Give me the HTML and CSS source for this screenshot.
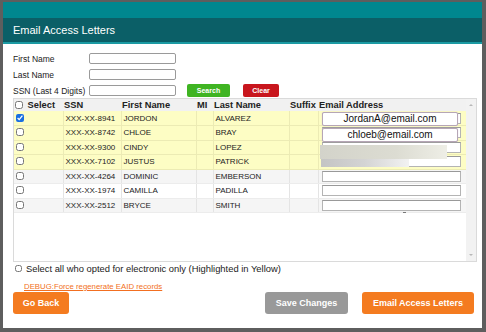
FILE: index.html
```html
<!DOCTYPE html>
<html lang="en">
<head>
    <meta charset="UTF-8">
    <meta name="viewport" content="width=device-width, initial-scale=1.0">
    <title>Email Access Letters</title>
    <link rel="stylesheet" href="styles.css">
</head>
<body>
    <div class="frame">
        <div class="topbar"></div>
        <div class="titlebar">Email Access Letters</div>

        <div class="content">
            <div class="search-form">
                <label>First Name</label>
                <input type="text" class="field">
                <label>Last Name</label>
                <input type="text" class="field">
                <label>SSN (Last 4 Digits)</label>
                <div class="field-row">
                    <input type="text" class="field">
                    <button class="btn-search">Search</button>
                    <button class="btn-clear">Clear</button>
                </div>
            </div>

            <div class="grid-box">
                <div class="grid-scroll">
                    <table class="grid">
                        <colgroup>
                            <col style="width:49px">
                            <col style="width:58px">
                            <col style="width:75px">
                            <col style="width:17px">
                            <col style="width:76px">
                            <col style="width:29px">
                            <col style="width:148px">
                        </colgroup>
                        <thead>
                            <tr>
                                <th><input type="checkbox" class="check"> Select</th>
                                <th>SSN</th>
                                <th>First Name</th>
                                <th>MI</th>
                                <th>Last Name</th>
                                <th>Suffix</th>
                                <th>Email Address</th>
                            </tr>
                        </thead>
                        <tbody>
                            <tr class="electronic">
                                <td><input type="checkbox" class="check" checked></td>
                                <td>XXX-XX-8941</td><td>JORDON</td><td></td><td>ALVAREZ</td><td></td>
                                <td><input type="text" class="email"></td>
                            </tr>
                            <tr class="electronic">
                                <td><input type="checkbox" class="check"></td>
                                <td>XXX-XX-8742</td><td>CHLOE</td><td></td><td>BRAY</td><td></td>
                                <td><input type="text" class="email"></td>
                            </tr>
                            <tr class="electronic">
                                <td><input type="checkbox" class="check"></td>
                                <td>XXX-XX-9300</td><td>CINDY</td><td></td><td>LOPEZ</td><td></td>
                                <td><input type="text" class="email"></td>
                            </tr>
                            <tr class="electronic">
                                <td><input type="checkbox" class="check"></td>
                                <td>XXX-XX-7102</td><td>JUSTUS</td><td></td><td>PATRICK</td><td></td>
                                <td><input type="text" class="email"></td>
                            </tr>
                            <tr class="alt">
                                <td><input type="checkbox" class="check"></td>
                                <td>XXX-XX-4264</td><td>DOMINIC</td><td></td><td>EMBERSON</td><td></td>
                                <td><input type="text" class="email"></td>
                            </tr>
                            <tr>
                                <td><input type="checkbox" class="check"></td>
                                <td>XXX-XX-1974</td><td>CAMILLA</td><td></td><td>PADILLA</td><td></td>
                                <td><input type="text" class="email"></td>
                            </tr>
                            <tr class="alt">
                                <td><input type="checkbox" class="check"></td>
                                <td>XXX-XX-2512</td><td>BRYCE</td><td></td><td>SMITH</td><td></td>
                                <td><input type="text" class="email"></td>
                            </tr>
                        </tbody>
                    </table>
                </div>
                <div class="vscroll">
                    <span class="arrow-up"></span>
                    <span class="arrow-down"></span>
                </div>

                <!-- annotations pasted over the grid -->
                <div class="callout callout-1">JordanA@email.com</div>
                <div class="callout callout-2">chloeb@email.com</div>
                <div class="smudge smudge-1"></div>
                <div class="smudge smudge-2"></div>
                <span class="caret-mark"></span>
            </div>

            <label class="select-all"><input type="checkbox" class="check"> Select all who opted for electronic only (Highlighted in Yellow)</label>

            <a href="#" class="debug-link">DEBUG:Force regenerate EAID records</a>

            <div class="actions">
                <button class="btn btn-orange btn-back">Go Back</button>
                <div class="actions-right">
                    <button class="btn btn-gray">Save Changes</button>
                    <button class="btn btn-orange">Email Access Letters</button>
                </div>
            </div>
        </div>
    </div>
</body>
</html>
```

FILE: styles.css
```css
html, body {
    margin: 0;
    padding: 0;
    height: 100%;
}
body {
    font-family: 'Liberation Sans', Arial, sans-serif;
    background-color: #5e5e5e;
    color: #222;
    padding: 2px 4px 4px 3px;
    box-sizing: border-box;
}
.frame {
    background-color: #fff;
    height: 326px;
    display: flex;
    flex-direction: column;
}
.topbar {
    height: 16px;
    background-color: #00878f;
}
.titlebar {
    height: 24px;
    line-height: 24px;
    background-color: #0b5f67;
    border-bottom: 2px solid #1b9aa3;
    color: #fff;
    font-size: 11px;
    padding-left: 10px;
}
.content {
    padding: 9px 8px 0 10px;
    flex: 1;
    display: flex;
    flex-direction: column;
}
.search-form {
    display: grid;
    grid-template-columns: 76px auto;
    row-gap: 5px;
    align-items: center;
    font-size: 8.5px;
}
.field {
    width: 87px;
    height: 11px;
    box-sizing: border-box;
    border: 1px solid #9a9a9a;
    border-radius: 2px;
    padding: 0;
    margin: 0;
}
.field-row {
    display: flex;
    align-items: center;
    height: 11px;
}
.btn-search, .btn-clear {
    height: 13px;
    border: none;
    border-radius: 2px;
    color: #fff;
    font-family: 'Liberation Sans', Arial, sans-serif;
    font-weight: bold;
    font-size: 7px;
    padding: 0;
}
.btn-search {
    width: 43px;
    margin-left: 11px;
    background-color: #3fb422;
}
.btn-clear {
    width: 36px;
    margin-left: 13px;
    background-color: #c8161d;
}
.grid-box {
    position: relative;
    margin-top: 2px;
    width: 464px;
    height: 164px;
    box-sizing: border-box;
    border: 1px solid #dadada;
    display: flex;
}
.grid-scroll {
    width: 452px;
}
.grid {
    border-collapse: collapse;
    table-layout: fixed;
    width: 452px;
    font-size: 8px;
}
.grid th {
    background-color: #f1f1f1;
    height: 12px;
    font-size: 9.3px;
    text-align: left;
    padding: 0 0 0 1px;
    white-space: nowrap;
}
.grid td {
    height: 14.5px;
    padding: 0 0 0 2px;
    border-left: 1px solid #e4e4e4;
    border-bottom: 1px solid #ececec;
    white-space: nowrap;
    box-sizing: border-box;
}
.grid td:first-child {
    border-left: none;
    padding-left: 2px;
}
.grid tr.electronic td {
    background-color: #fdfdc4;
    border-color: #ecebb4;
}
.grid tr.alt td {
    background-color: #f5f5f5;
}
.check {
    width: 8px;
    height: 8px;
    margin: 0;
    vertical-align: -1px;
    accent-color: #1a6fe0;
}
.grid th .check {
    margin-right: 2px;
}
.email {
    display: block;
    width: 139px;
    height: 11px;
    margin-left: 1px;
    box-sizing: border-box;
    border: 1px solid #b4b4b4;
    border-top-color: #999;
    padding: 0;
    background-color: #fff;
}
.vscroll {
    width: 10px;
    background-color: #f2f2f2;
    display: flex;
    flex-direction: column;
    justify-content: space-between;
    align-items: center;
    padding: 5px 0;
    box-sizing: border-box;
}
.arrow-up, .arrow-down {
    width: 0;
    height: 0;
    border-left: 2px solid transparent;
    border-right: 2px solid transparent;
}
.arrow-up {
    border-bottom: 2px solid #b8b8b8;
}
.arrow-down {
    border-top: 2px solid #b8b8b8;
}
.callout {
    position: absolute;
    left: 308px;
    width: 136px;
    height: 14px;
    box-sizing: border-box;
    border: 1px solid #b6a6b6;
    border-radius: 2px;
    background-color: #fff;
    font-size: 10px;
    line-height: 12px;
    text-align: center;
    color: #111;
    box-shadow: 0 0 1px #c8b8c8;
}
.callout-1 {
    top: 13px;
}
.callout-2 {
    top: 29px;
}
.smudge {
    position: absolute;
}
.smudge-1 {
    left: 306px;
    top: 46px;
    width: 127px;
    height: 14px;
    background: linear-gradient(to right, #d3d3ca, #dcdcd2 60%, #eeeee6);
}
.smudge-2 {
    left: 307px;
    top: 60px;
    width: 88px;
    height: 8px;
    background: linear-gradient(to right, #c4c4c4, #d4d4d4 50%, #f2f2f2);
}
.caret-mark {
    position: absolute;
    left: 389px;
    top: 111px;
    width: 3px;
    height: 2px;
    border-bottom: 1px solid #777;
}
.select-all {
    display: flex;
    align-items: center;
    gap: 4px;
    margin-top: 2px;
    margin-left: 2px;
    font-size: 9.4px;
    height: 9px;
}
.select-all .check {
    width: 7px;
    height: 7px;
}
.debug-link {
    margin-top: 9px;
    margin-left: 11px;
    font-size: 7.8px;
    color: #f26f21;
    align-self: flex-start;
}
.actions {
    margin-top: 1px;
    display: flex;
    justify-content: space-between;
    width: 461px;
}
.actions-right {
    display: flex;
    gap: 14px;
}
.btn {
    height: 22px;
    border: none;
    border-radius: 3px;
    color: #fff;
    font-family: 'Liberation Sans', Arial, sans-serif;
    font-weight: bold;
    font-size: 9px;
    padding: 0;
}
.btn-orange {
    background-color: #f47b20;
}
.btn-back {
    width: 56px;
}
.btn-gray {
    width: 83px;
    background-color: #999;
}
.actions-right .btn-orange {
    width: 112px;
}
```
